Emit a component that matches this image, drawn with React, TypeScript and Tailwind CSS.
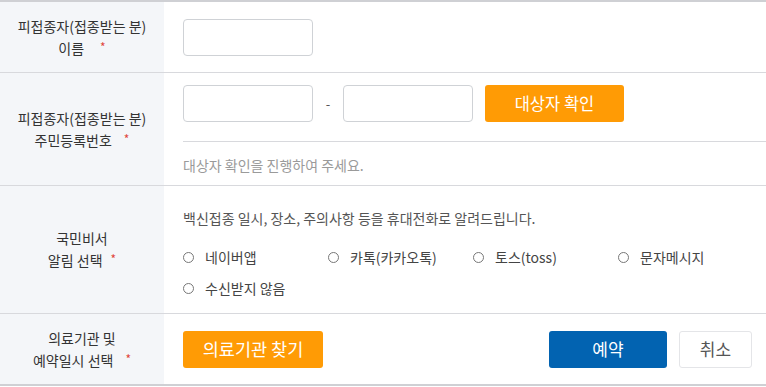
const font = { fontFamily: '"Noto Sans CJK KR", "Noto Sans", sans-serif' };

const Star = ({ gap = "ml-3" }: { gap?: string }) => (
  <span className={`${gap} relative -top-[2px] text-[12px] text-[#e0463c]`}>*</span>
);

const Label = ({ children }: { children: React.ReactNode }) => (
  <div className="flex flex-col items-center justify-center bg-[#f4f6f9] text-[14px] leading-[22px] text-[#333] text-center">
    {children}
  </div>
);

const Radio = ({ text }: { text: string }) => (
  <label className="flex items-center gap-[11px] text-[14px] text-[#444]">
    <span className="w-[11px] h-[11px] rounded-full border border-[#777] bg-white" />
    {text}
  </label>
);

const inputCls =
  "w-[130px] h-[37px] rounded-[4px] border border-[#cfd2d6] bg-white";

export default function App() {
  return (
    <div style={font} className="w-[766px] h-[387px] bg-white overflow-hidden">
      <div className="border-t-2 border-[#cfd0d4]">
        {/* 이름 */}
        <div className="grid grid-cols-[164px_1fr] h-[71px] border-b border-[#d8d9dd]">
          <Label>
            <span>피접종자(접종받는 분)</span>
            <span>
              이름<Star gap="ml-4" />
            </span>
          </Label>
          <div className="flex items-center pl-[19px]">
            <div className={inputCls} />
          </div>
        </div>

        {/* 주민등록번호 */}
        <div className="grid grid-cols-[164px_1fr] h-[113px] border-b border-[#d8d9dd]">
          <Label>
            <span>피접종자(접종받는 분)</span>
            <span>
              주민등록번호<Star gap="ml-3" />
            </span>
          </Label>
          <div className="flex flex-col pl-[19px] pt-[12px]">
            <div className="flex items-center">
              <div className={inputCls} />
              <span className="w-[30px] text-center text-[13px] text-[#555]">-</span>
              <div className={inputCls} />
              <button className="ml-[12px] w-[139px] h-[37px] rounded-[3px] bg-[#ff9b05] text-white text-[16.5px]">
                대상자 확인
              </button>
            </div>
            <div className="mt-[19px] border-t border-[#d8d9dd]" />
            <p className="mt-[13px] text-[14px] text-[#9a9a9a]">
              대상자 확인을 진행하여 주세요.
            </p>
          </div>
        </div>

        {/* 알림 선택 */}
        <div className="grid grid-cols-[164px_1fr] h-[128px] border-b border-[#d8d9dd]">
          <Label>
            <span>국민비서</span>
            <span>
              알림 선택<Star gap="ml-2" />
            </span>
          </Label>
          <div className="flex flex-col pl-[19px] pt-[22px]">
            <p className="text-[14px] text-[#555] leading-[20px]">
              백신접종 일시, 장소, 주의사항 등을 휴대전화로 알려드립니다.
            </p>
            <div className="mt-[19px] grid grid-cols-[145px_145px_145px_145px] gap-y-[11px] leading-[20px]">
              <Radio text="네이버앱" />
              <Radio text="카톡(카카오톡)" />
              <Radio text="토스(toss)" />
              <Radio text="문자메시지" />
              <Radio text="수신받지 않음" />
            </div>
          </div>
        </div>

        {/* 의료기관 */}
        <div className="grid grid-cols-[164px_1fr] h-[72px] border-b-2 border-[#cfd0d4]">
          <Label>
            <span>의료기관 및</span>
            <span>
              예약일시 선택<Star gap="ml-3" />
            </span>
          </Label>
          <div className="flex items-center pl-[19px]">
            <button className="w-[140px] h-[37px] rounded-[3px] bg-[#ff9b05] text-white text-[17.5px]">
              의료기관 찾기
            </button>
            <button className="ml-[226px] w-[118px] h-[37px] rounded-[3px] bg-[#0263b1] text-white text-[17px]">
              예약
            </button>
            <button className="ml-[12px] w-[73px] h-[37px] rounded-[3px] border border-[#e4e5e8] bg-white text-[#555] text-[17px]">
              취소
            </button>
          </div>
        </div>
      </div>
    </div>
  );
}
